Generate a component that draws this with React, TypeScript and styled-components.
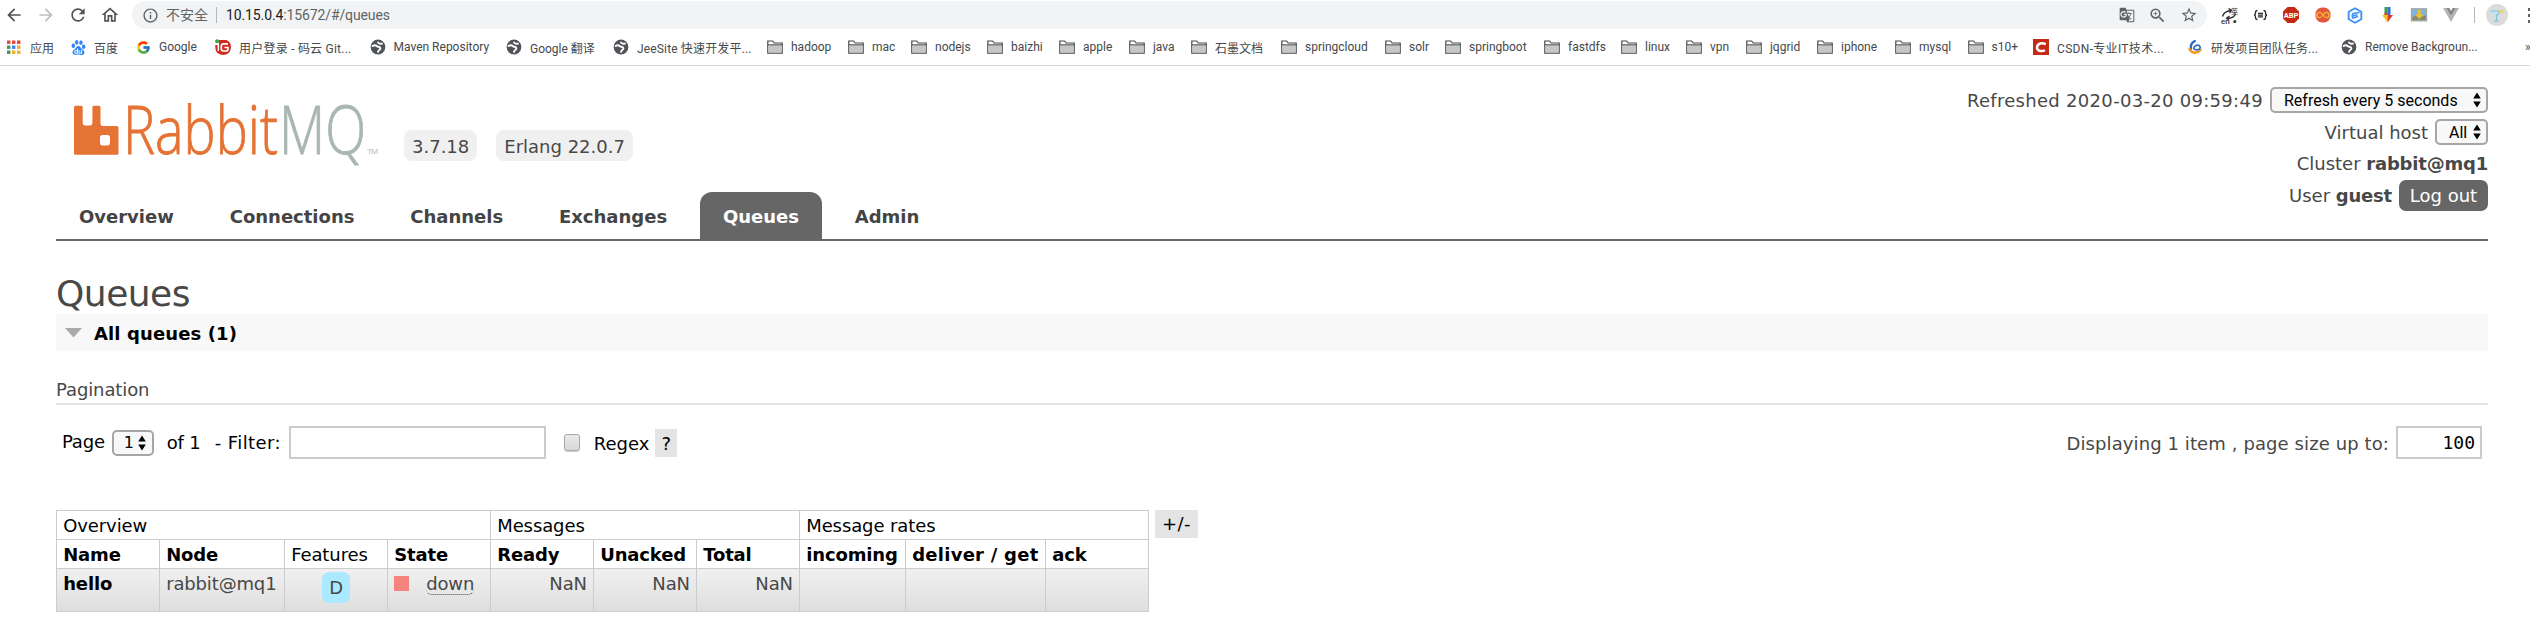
import React from 'react';
import styled, { createGlobalStyle } from 'styled-components';
import { FcGoogle } from 'react-icons/fc';
import { SiBaidu } from 'react-icons/si';
import { MdArrowBack, MdArrowForward, MdRefresh, MdOutlineHome, MdInfoOutline, MdStarBorder, MdZoomIn, MdGTranslate } from 'react-icons/md';

const GlobalStyle = createGlobalStyle`
  *, *::before, *::after { box-sizing: border-box; }
  body { margin: 0; background: #fff; overflow: hidden; }
  #root { height: 620px; }
`;

const sans = `Roboto, "Noto Sans CJK SC", sans-serif`;
const verdana = `"DejaVu Sans", Verdana, sans-serif`;

/* ---------- Browser chrome ---------- */

const Chrome = styled.div`
  height: 66px;
  border-bottom: 1px solid #d8d8d8;
  font-family: ${sans};
  background: #fff;
`;

const AddressRow = styled.div`
  display: flex;
  align-items: center;
  height: 30px;
  overflow: hidden;
`;

const NavButtons = styled.div`
  display: flex;
  align-items: center;
  gap: 12px;
  width: 132px;
  padding-left: 4px;
  color: #5f6368;
`;

const NavIcon = styled.span<{ $dim?: boolean }>`
  display: flex;
  font-size: 20px;
  color: ${(p) => (p.$dim ? '#bcbec1' : '#505458')};
`;

const Omnibox = styled.div`
  display: flex;
  align-items: center;
  width: 2075px;
  height: 28px;
  padding-left: 10px;
  border-radius: 14px;
  background: #f1f3f4;
  font-size: 14px;
  line-height: 28px;
  color: #5f6368;
`;

const InfoIcon = styled(MdInfoOutline)`
  width: 17px;
  height: 17px;
  margin-right: 7px;
`;

const Insecure = styled.span`
  padding-right: 8px;
`;

const Bar = styled.span`
  width: 1px;
  height: 16px;
  background: #b5b7ba;
`;

const Url = styled.span`
  margin-left: 9px;
  letter-spacing: -0.12px;
  b {
    font-weight: 400;
    color: #202124;
  }
`;

const OmniboxActions = styled.div`
  display: flex;
  align-items: center;
  gap: 13px;
  margin-left: auto;
  margin-right: 9px;
  font-size: 18px;
  svg { display: block; }
`;

const Extensions = styled.div`
  display: flex;
  align-items: center;
  margin-left: 12px;
  gap: 14px;
  svg { display: block; flex: none; }
`;

const Avatar = styled.div`
  display: flex;
  align-items: center;
  justify-content: center;
  width: 22px;
  height: 22px;
  margin-left: 11px;
  border-radius: 50%;
  background: #dcdcdc;
`;

const MenuDots = styled.div`
  display: grid;
  gap: 3px;
  margin-left: auto;
  i {
    width: 2px;
    height: 3px;
    background: #5f6368;
  }
`;

const Bookmarks = styled.div`
  display: flex;
  align-items: center;
  height: 34px;
  padding-left: 6px;
  font-size: 12px;
  color: #45484c;
`;

const Bookmark = styled.div<{ $w: number; $ls?: number }>`
  display: flex;
  align-items: center;
  flex: none;
  gap: 8px;
  width: ${(p) => p.$w}px;
  letter-spacing: ${(p) => p.$ls ?? 0}px;
  white-space: nowrap;
  svg { flex: none; display: block; }
`;

const FolderIcon = () => (
  <svg width="16" height="14" viewBox="0 0 16 14">
    <path d="M.8 13.2V1h4.800l1.600 2h8v10.200z" fill="#fff" stroke="#48494b" strokeWidth="1.2" />
    <path d="M1.300 5h13.400v7.600H1.300z" fill="#c6c6c6" />
    <path d="M.8 4.800h14.400" stroke="#48494b" strokeWidth="1" />
  </svg>
);

const GlobeIcon = () => (
  <svg width="16" height="16" viewBox="0 0 16 16">
    <circle cx="8" cy="8" r="7.400" fill="#505357" />
    <path d="M2.600 7C4 6 6 6.300 7 7.200s3.400.3 3.400 2.100c0 1.500-1.600 1.500-2.400 3.500" fill="none" stroke="#fff" strokeWidth="1.900" strokeLinecap="round" />
    <path d="M8 3.400c.3 1.300 2 1.500 4 1.200" fill="none" stroke="#fff" strokeWidth="1.900" strokeLinecap="round" />
  </svg>
);

const AppsIcon = () => {
  const colors = ['#e2463a', '#e2463a', '#e2463a', '#3a9a55', '#4285f4', '#eeb02c', '#3a9a55', '#eeb02c', '#eeb02c'];
  return (
    <svg width="16" height="16" viewBox="0 0 16 16">
      {colors.map((c, i) => (
        <rect key={i} x={1 + (i % 3) * 5} y={1.5 + Math.floor(i / 3) * 5} width="3.400" height="3.400" fill={c} />
      ))}
    </svg>
  );
};

const GiteeIcon = () => (
  <svg width="16" height="16" viewBox="0 0 16 16">
    <path d="M4 1h7.500Q16 3 16 8.200 15.500 15.600 8 16 .5 15.500 .3 8.500V6H4z" fill="#d02c20" />
    <circle cx="2.100" cy="2.200" r="2" fill="#35a83a" />
    <path d="M3.300 6v6" stroke="#fff" strokeWidth="1.500" />
    <path d="M13 4.800H8.600Q6.300 4.800 6.300 7v2.800q0 2.200 2.300 2.200H11q2 0 2-2V8.500H9.500" fill="none" stroke="#fff" strokeWidth="1.700" />
  </svg>
);

const CsdnIcon = () => (
  <svg width="16" height="16" viewBox="0 0 16 16">
    <rect width="16" height="16" fill="#c42b17" />
    <path d="M12.800 5.200C9 3.600 4.600 4 4 8.200c-.3 3.800 4 4.500 8 3.200" fill="none" stroke="#fff" strokeWidth="2.500" />
  </svg>
);

const SwirlIcon = () => (
  <svg width="16" height="16" viewBox="0 0 16 16">
    <path d="M7.800 2C4.500 4 3.200 6.500 4 9.500" fill="none" stroke="#2a6fc0" strokeWidth="2.400" strokeLinecap="round" />
    <path d="M2.500 10c2 4.300 7.500 5 11 1" fill="none" stroke="#f39a22" strokeWidth="2.600" strokeLinecap="round" />
    <path d="M6.800 9.800c-.3-2.800 3.200-4.600 5.700-3 1.600 1.600.2 3.900-2.200 4.100-1.800.1-3-.4-3.500-1.100z" fill="none" stroke="#2a6fc0" strokeWidth="1.700" />
  </svg>
);

const BaiduIcon = () => <SiBaidu size={15} color="#3385f5" />;
const GoogleIcon = () => <FcGoogle size={15} />;

const icons = {
  apps: AppsIcon,
  baidu: BaiduIcon,
  google: GoogleIcon,
  gitee: GiteeIcon,
  globe: GlobeIcon,
  folder: FolderIcon,
  csdn: CsdnIcon,
  swirl: SwirlIcon,
};

const bookmarks: [keyof typeof icons, string, number, number?][] = [
  ['apps', '应用', 65],
  ['baidu', '百度', 65],
  ['google', 'Google', 79],
  ['gitee', '用户登录 - 码云 Git...', 154.5, 0.23],
  ['globe', 'Maven Repository', 136.5],
  ['globe', 'Google 翻译', 107],
  ['globe', 'JeeSite 快速开发平...', 154, 0.15],
  ['folder', 'hadoop', 81],
  ['folder', 'mac', 63],
  ['folder', 'nodejs', 76],
  ['folder', 'baizhi', 72],
  ['folder', 'apple', 70],
  ['folder', 'java', 62],
  ['folder', '石墨文档', 90],
  ['folder', 'springcloud', 104],
  ['folder', 'solr', 60],
  ['folder', 'springboot', 99],
  ['folder', 'fastdfs', 77],
  ['folder', 'linux', 65],
  ['folder', 'vpn', 60],
  ['folder', 'jqgrid', 71],
  ['folder', 'iphone', 78],
  ['folder', 'mysql', 72.5],
  ['folder', 's10+', 65.5],
  ['csdn', 'CSDN-专业IT技术...', 154, 0.32],
  ['swirl', '研发项目团队任务...', 154, 0.15],
  ['globe', 'Remove Backgroun...', 184],
];

const ExtensionIcons = () => (
  <Extensions>
    <svg width="20" height="18" viewBox="0 0 20 18">
      <path d="M3.500 10.500c1-4 4.500-5.500 8-6M9.500 2.500l3 1.800-2 2.700M16.500 7.500c-1 3.500-4 4.800-8 4.800M10.500 10l-3 2.300 2.600 2" fill="none" stroke="#333" strokeWidth="1.400" />
      <text x="12" y="7.500" fontFamily={sans} fontSize="7" fill="#333">英</text>
      <text x="2" y="17.500" fontFamily={sans} fontSize="8" fontWeight="500" fill="#333">en</text>
      <circle cx="15.800" cy="15.500" r="1.500" fill="#333" />
    </svg>
    <svg width="15" height="12" viewBox="0 0 15 12">
      <path d="M4.500 1.500q-2 0-2 2Q2.500 6 1 6q1.500 0 1.500 2.500 0 2 2 2M10.500 1.500q2 0 2 2Q12.500 6 14 6q-1.500 0-1.500 2.500 0 2-2 2M5 4.300h5M5 6.100h5M5 7.900h5" fill="none" stroke="#2c2c2c" strokeWidth="1.300" />
    </svg>
    <svg width="18" height="18" viewBox="0 0 18 18">
      <path d="M5.500 1h7L17 5.500v7L12.500 17h-7L1 12.500v-7z" fill="#c42a14" />
      <text x="9" y="11.700" textAnchor="middle" fontFamily={sans} fontSize="7.500" fontWeight="700" fill="#fff">ABP</text>
    </svg>
    <svg width="18" height="16" viewBox="0 0 18 16">
      <rect x="1.500" y=".5" width="15" height="15" rx="6.500" fill="#e0563f" />
      <path d="M9 8C7.500 5.800 6.500 5.400 5.500 5.400a2.600 2.600 0 000 5.200C6.500 10.600 7.500 10.200 9 8s2.500-2.600 3.500-2.600a2.600 2.600 0 010 5.200C11.500 10.600 10.500 10.200 9 8z" fill="none" stroke="#f5c02c" strokeWidth="1.300" />
    </svg>
    <svg width="18" height="17" viewBox="0 0 18 17">
      <path d="M9 1.200l6.300 3.600v7.400L9 15.800l-6.300-3.600V4.800z" fill="none" stroke="#3f92f6" strokeWidth="1.900" strokeLinejoin="round" />
      <path d="M13.500 5.500L7 6.500Q5.500 8.500 7 11l5-1.500M7 8.800l4.500-1" fill="none" stroke="#3f92f6" strokeWidth="1.600" />
    </svg>
    <svg width="18" height="16" viewBox="0 0 18 16">
      <path d="M6.500 0h3v8h-3z" fill="#2f9e4f" />
      <path d="M9.500 0h3v8h-3z" fill="#2f6fd8" />
      <path d="M4 8h5.500v7.500z" fill="#f6c52d" />
      <path d="M9.500 8H15l-5.500 7.500z" fill="#e0392b" />
      <path d="M6.500 5.500h3V8h-3z" fill="#d9452f" />
    </svg>
    <svg width="18" height="14" viewBox="0 0 18 14">
      <rect x="1.500" y=".8" width="15" height="12" fill="#7fb5dd" stroke="#a6a6a0" strokeWidth="1.300" />
      <path d="M2.200 9.500l5-3 4 2.500 4.600-2v5H2.200z" fill="#8a8d68" />
      <path d="M7.700 2h3v4.500h2.500L9.200 11 5.200 6.500h2.500z" fill="#f4bf2b" />
    </svg>
    <svg width="18" height="14" viewBox="0 0 18 14">
      <path d="M1 0h3.300L9 8l4.700-8H17L9 14z" fill="#b4b4b4" />
      <path d="M4.300 0h3L9 3l1.700-3h3L9 8z" fill="#858585" />
    </svg>
    <Bar />
  </Extensions>
);

/* ---------- RabbitMQ header ---------- */

const Page = styled.div`
  padding: 0 42px 0 56px;
  font: 18px ${verdana};
  color: #484848;
`;

const Header = styled.header`
  display: flex;
  justify-content: space-between;
  height: 175px;
  border-bottom: 2px solid #666;
`;

const Branding = styled.div`
  display: flex;
  flex-direction: column;
  justify-content: space-between;
  padding-top: 39px;
`;

const LogoRow = styled.div`
  display: flex;
  align-items: flex-start;
  padding-left: 18px;
  svg { display: block; margin-right: 26px; overflow: visible; }
`;

const Version = styled.span`
  height: 31px;
  margin: 25px 19px 0 0;
  padding: 1px 8px 0;
  border-radius: 8px;
  background: #f0f0f0;
  line-height: 31px;
`;

const Tabs = styled.nav`
  display: flex;
  gap: 9.800px;
`;

const Tab = styled.a<{ $active?: boolean }>`
  height: 47px;
  padding: 1px 23px 0;
  border-radius: 12px 12px 0 0;
  background: ${(p) => (p.$active ? '#666' : 'transparent')};
  color: ${(p) => (p.$active ? '#fff' : '#444')};
  font-weight: 700;
  line-height: 48px;
`;

const Status = styled.div`
  display: flex;
  flex-direction: column;
  align-items: flex-end;
  padding-top: 18px;
`;

const StatusLine = styled.div<{ $h: number; $ls?: number }>`
  display: flex;
  align-items: center;
  gap: 7px;
  height: ${(p) => p.$h}px;
  letter-spacing: ${(p) => p.$ls ?? 0}px;
  white-space: pre;
`;

const Strong = styled.b`
  letter-spacing: -0.2px;
`;

const SelectBox = styled.button<{ $w: number; $verdana?: boolean }>`
  display: flex;
  align-items: center;
  justify-content: space-between;
  width: ${(p) => p.$w}px;
  height: 26px;
  padding: 0 5px 0 12px;
  border: 2px solid #a6a6a6;
  border-radius: 5px;
  background: #f8f8f8;
  color: #000;
  font: 16px ${(p) => (p.$verdana ? verdana : sans)};
  letter-spacing: 0;
`;

const Arrows = () => (
  <svg width="8" height="16" viewBox="0 0 8 16">
    <path d="M4 .5L7.800 6.600H.2zM4 15.500L.2 9.400h7.600z" fill="#000" />
  </svg>
);

const LogoutButton = styled.button`
  height: 31px;
  width: 89px;
  padding: 0;
  border: 0;
  border-radius: 7px;
  background: #666;
  color: #fff;
  font: 18px/31px ${verdana};
`;

const Logo = () => (
  <svg width="304" height="52" viewBox="0 0 304 52">
    <path
      fillRule="evenodd"
      fill="#e57335"
      d="M1.500.7H7.300Q8.700.7 8.700 2.200V17.500Q8.700 20.500 11 20.500H16Q18.400 20.500 18.400 17.500V2.200Q18.400.7 19.800.7H25Q26.500.7 26.500 2.200V18.500Q26.500 21 28.500 21H43Q44.500 21 44.500 22.500V48.200Q44.500 49.700 43 49.700H1.500Q0 49.700 0 48.200V2.200Q0 .7 1.500.7ZM28.500 30Q26 30 26 33V37.500Q26 40.500 28.500 40.500H33.500Q36 40.500 36 37.500V33Q36 30 33.500 30Z"
    />
    <g fontFamily={'"Open Sans", sans-serif'} fontSize="67" fontWeight="300" strokeWidth=".9">
      <text x="49" y="48.500" textLength="155" lengthAdjust="spacingAndGlyphs" fill="#e57335" stroke="#e57335">Rabbit</text>
      <text x="205" y="48.500" textLength="87" lengthAdjust="spacingAndGlyphs" fill="#a9b7b1" stroke="#a9b7b1">MQ</text>
    </g>
    <text x="293" y="48.500" fontFamily={sans} fontSize="8" fill="#b9bfbc" textLength="11">TM</text>
  </svg>
);

/* ---------- Content ---------- */

const Title = styled.h1`
  margin: 32px 0 0;
  height: 41px;
  font-size: 36px;
  font-weight: 400;
  line-height: 42px;
  letter-spacing: -0.5px;
`;

const SectionHeader = styled.h2`
  display: flex;
  align-items: center;
  gap: 12px;
  margin: 0;
  height: 37px;
  padding: 2px 0 0 9px;
  background: #f8f8f8;
  color: #000;
  font-size: 18px;
  font-weight: 700;
  letter-spacing: 0.12px;
  svg { margin-top: -1px; }
`;

const SubHeading = styled.h3`
  margin: 27px 0 0;
  height: 27px;
  border-bottom: 2px solid #e4e4e4;
  font-size: 18px;
  font-weight: 400;
  line-height: 24px;
  letter-spacing: -0.1px;
`;

const Pager = styled.div`
  display: flex;
  align-items: center;
  height: 33px;
  margin: 21px 6px 0;
  color: #000;
  white-space: pre;
`;

const PageLabel = styled.span`
  margin: 0 7px 3px 0;
  letter-spacing: -0.2px;
`;

const PageSelect = styled(SelectBox)`
  margin-right: 13px;
  padding: 0 6px 0 10px;
`;

const Count = styled.span`
  width: 48px;
  letter-spacing: -0.2px;
`;

const FilterLabel = styled.span`
  width: 74px;
  letter-spacing: 0.4px;
`;

const FilterInput = styled.input`
  width: 257px;
  height: 33px;
  border: 2px solid #ccc;
  outline: 0;
`;

const CheckBox = styled.span`
  width: 16px;
  height: 17px;
  margin: 0 14px 0 18px;
  border: 1px solid #a8a8a8;
  border-radius: 3px;
  background: linear-gradient(#e8e8e8, #d8d8d8);
  box-shadow: 0 1px 1px #ccc;
`;

const RegexLabel = styled.span`
  margin: 1px 6px 0 0;
`;

const Help = styled.span`
  width: 22px;
  height: 28px;
  background: #e4e4e4;
  line-height: 29px;
  text-align: center;
`;

const Displaying = styled.span`
  margin: 1px 7px 0 auto;
  color: #484848;
  letter-spacing: 0.1px;
`;

const SizeInput = styled.input`
  width: 86px;
  height: 33px;
  padding: 0 5px;
  border: 2px solid #ccc;
  outline: 0;
  color: #000;
  font: 18px "DejaVu Sans Mono", monospace;
  text-align: right;
`;

const TableRow = styled.div`
  display: flex;
  align-items: flex-start;
  gap: 6px;
  margin-top: 51px;
`;

const Table = styled.table`
  width: 1093px;
  border-collapse: collapse;
  table-layout: fixed;
  color: #000;
  th, td { border: 1px solid #ccc; }
`;

const Th = styled.th<{ $plain?: boolean }>`
  height: 29px;
  padding: 1px 0 0 6.200px;
  font-weight: ${(p) => (p.$plain ? 400 : 700)};
  line-height: 27px;
  letter-spacing: ${(p) => (p.$plain ? '-0.1px' : '-0.15px')};
  text-align: left;
  white-space: nowrap;
`;

const WideTh = styled(Th)`
  letter-spacing: 0.25px;
`;

const QueueRow = styled.tr`
  background: linear-gradient(#f0f0f0, #dedede);
`;

const Td = styled.td<{ $align?: string }>`
  height: 43px;
  padding: 0 6.200px;
  color: #484848;
  line-height: 29px;
  letter-spacing: -0.15px;
  text-align: ${(p) => p.$align ?? 'left'};
  vertical-align: top;
  white-space: nowrap;
  b { color: #000; }
`;

const Feature = styled.span`
  display: block;
  width: 28px;
  height: 31px;
  margin: 3px auto 0;
  border-radius: 7px;
  background: #aae9ff;
  line-height: 32px;
`;

const State = styled.div`
  display: flex;
  align-items: flex-start;
  gap: 17px;
`;

const StateSquare = styled.span`
  width: 15px;
  height: 15px;
  margin-top: 7px;
  background: #f3847e;
`;

const StateText = styled.span`
  height: 26px;
  border-bottom: 1px dotted #484848;
  border-radius: 6px;
`;

const Toggle = styled.span`
  width: 43px;
  height: 28px;
  background: #e4e4e4;
  color: #000;
  line-height: 28px;
  letter-spacing: 0.5px;
  text-align: center;
`;

const tabs = ['Overview', 'Connections', 'Channels', 'Exchanges', 'Queues', 'Admin'];
const columns = [103, 125, 103, 103, 103, 103, 103, 106, 140, 103];

export default function App() {
  return (
    <>
      <GlobalStyle />
      <Chrome>
        <AddressRow>
          <NavButtons>
            <NavIcon><MdArrowBack /></NavIcon>
            <NavIcon $dim><MdArrowForward /></NavIcon>
            <NavIcon><MdRefresh /></NavIcon>
            <NavIcon><MdOutlineHome /></NavIcon>
          </NavButtons>
          <Omnibox>
            <InfoIcon />
            <Insecure>不安全</Insecure>
            <Bar />
            <Url><b>10.15.0.4</b>:15672/#/queues</Url>
            <OmniboxActions>
              <MdGTranslate size={16} />
              <MdZoomIn size={19} />
              <MdStarBorder size={18} />
            </OmniboxActions>
          </Omnibox>
          <ExtensionIcons />
          <Avatar>
            <svg width="16" height="16" viewBox="0 0 16 16">
              <path d="M1 4h11L7.500 8.800V13" fill="#bfe4f0" stroke="#7fc0d8" strokeWidth="1.200" />
              <path d="M5 14h5" stroke="#7fc0d8" strokeWidth="1.200" />
              <path d="M9 3.500l5.500-1V6H11z" fill="#ead27a" />
            </svg>
          </Avatar>
          <MenuDots><i /><i /><i /></MenuDots>
        </AddressRow>
        <Bookmarks>
          {bookmarks.map(([icon, label, w, ls]) => {
            const Icon = icons[icon];
            return (
              <Bookmark key={label} $w={w} $ls={ls}>
                <Icon />
                {label}
              </Bookmark>
            );
          })}
          »
        </Bookmarks>
      </Chrome>

      <Page>
        <Header>
          <Branding>
            <LogoRow>
              <Logo />
              <Version>3.7.18</Version>
              <Version>Erlang 22.0.7</Version>
            </LogoRow>
            <Tabs>
              {tabs.map((t) => (
                <Tab key={t} $active={t === 'Queues'}>{t}</Tab>
              ))}
            </Tabs>
          </Branding>
          <Status>
            <StatusLine $h={32} $ls={0.3}>
              Refreshed 2020-03-20 09:59:49
              <SelectBox $w={218}>Refresh every 5 seconds<Arrows /></SelectBox>
            </StatusLine>
            <StatusLine $h={32}>
              Virtual host
              <SelectBox $w={53}>All<Arrows /></SelectBox>
            </StatusLine>
            <StatusLine $h={30}>
              <span>Cluster <Strong>rabbit@mq1</Strong></span>
            </StatusLine>
            <StatusLine $h={35}>
              <span>User <Strong>guest</Strong></span>
              <LogoutButton>Log out</LogoutButton>
            </StatusLine>
          </Status>
        </Header>

        <Title>Queues</Title>
        <SectionHeader>
          <svg width="17" height="10" viewBox="0 0 17 10"><path d="M0 0h17L8.500 9.500z" fill="#aaa" /></svg>
          All queues (1)
        </SectionHeader>
        <SubHeading>Pagination</SubHeading>

        <Pager>
          <PageLabel>Page</PageLabel>
          <PageSelect $w={42} $verdana>1<Arrows /></PageSelect>
          <Count>of 1</Count>
          <FilterLabel>- Filter:</FilterLabel>
          <FilterInput />
          <CheckBox />
          <RegexLabel>Regex</RegexLabel>
          <Help>?</Help>
          <Displaying>Displaying 1 item , page size up to:</Displaying>
          <SizeInput defaultValue="100" />
        </Pager>

        <TableRow>
          <Table>
            <colgroup>
              {columns.map((w, i) => <col key={i} width={w} />)}
            </colgroup>
            <thead>
              <tr>
                <Th $plain colSpan={4}>Overview</Th>
                <Th $plain colSpan={3}>Messages</Th>
                <Th $plain colSpan={3}>Message rates</Th>
              </tr>
              <tr>
                <Th>Name</Th>
                <Th>Node</Th>
                <Th $plain>Features</Th>
                <Th>State</Th>
                <Th>Ready</Th>
                <Th>Unacked</Th>
                <Th>Total</Th>
                <Th>incoming</Th>
                <WideTh>deliver / get</WideTh>
                <Th>ack</Th>
              </tr>
            </thead>
            <tbody>
              <QueueRow>
                <Td><b>hello</b></Td>
                <Td>rabbit@mq1</Td>
                <Td $align="center"><Feature>D</Feature></Td>
                <Td>
                  <State>
                    <StateSquare />
                    <StateText>down</StateText>
                  </State>
                </Td>
                <Td $align="right">NaN</Td>
                <Td $align="right">NaN</Td>
                <Td $align="right">NaN</Td>
                <Td />
                <Td />
                <Td />
              </QueueRow>
            </tbody>
          </Table>
          <Toggle>+/-</Toggle>
        </TableRow>
      </Page>
    </>
  );
}
